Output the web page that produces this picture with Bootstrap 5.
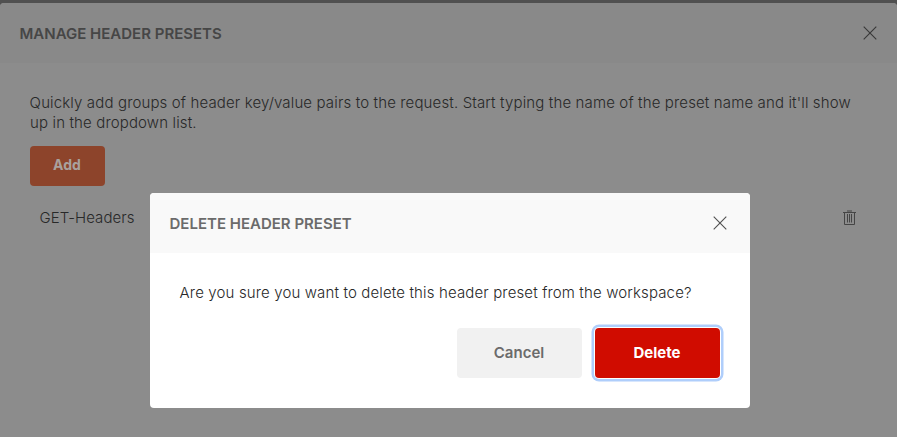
<!DOCTYPE html>
<html lang="en">
<head>
<meta charset="utf-8">
<title>Manage Header Presets</title>
<link href="https://cdn.jsdelivr.net/npm/bootstrap@5.3.0/dist/css/bootstrap.min.css" rel="stylesheet">
<style>
body{font-family:Inter,sans-serif;font-size:15px;line-height:20px;background:#505050;height:437px;overflow:hidden;color:#282828}
.page-panel{margin-top:3px;height:434px;background:#8c8c8c;border-radius:4px 4px 0 0;overflow:hidden}
.panel-head{height:60px;padding:0 20px 0 19.5px;background:#898989;color:#464646}
.panel-title{font-size:15px;font-weight:600;line-height:20px;padding-top:2px;letter-spacing:0}
.panel-main{padding:30px}
.panel-main p,.confirm-main p{font-weight:350;letter-spacing:.14px;text-indent:-.4px}
.btn-add{width:75px;height:40px;margin-top:13px;padding:0 1px 3px 0;background:#8d442b;color:#a9a19e;font-size:14px;font-weight:700;border:0;border-radius:4px}
.preset-row{padding:0 11px 0 9.500px;margin-top:22px;font-weight:350}
.preset-row span{letter-spacing:.06px}
.dialog-layer{top:193px;left:150px}
.confirm-box{width:600px;height:215px;background:#fff;border-radius:4px;overflow:hidden}
.confirm-box .panel-head{background:#f9f9f9;color:#6b6b6b;padding-right:23px}
.confirm-main{padding:30px}
.btn-wide{width:125px;height:50px;padding:0 1px 0 0;border:0;border-radius:4px;font-size:15px;font-weight:600}
.confirm-actions{gap:13px;margin-top:25px}
.btn-cancel{background:#f1f1f1;color:#6b6b6b}
.btn-delete{background:#d00c00;color:#fff;font-weight:700;box-shadow:0 0 0 1px #fff,0 0 0 3.500px #afcefb}
</style>
<script src="https://cdn.jsdelivr.net/npm/bootstrap@5.3.0/dist/js/bootstrap.bundle.min.js"></script>
</head>
<body>
<main class="page-panel">
  <header class="panel-head d-flex align-items-center justify-content-between">
    <h1 class="panel-title mb-0">MANAGE HEADER PRESETS</h1>
    <svg width="14" height="14" viewBox="0 0 14 14" fill="none" stroke="#383838" stroke-width="1.1"><path d="M.7.7l12.6 12.6M13.3.7L.7 13.3"/></svg>
  </header>
  <section class="panel-main">
    <p class="m-0">Quickly add groups of header key/value pairs to the request. Start typing the name of the preset name and it'll show up in the dropdown list.</p>
    <button class="btn btn-add d-block" type="button">Add</button>
    <div class="preset-row d-flex align-items-center justify-content-between">
      <span>GET-Headers</span>
      <svg width="13" height="16" viewBox="0 0 13 16" fill="none" stroke="#454545"><path d="M0 2.500h13M4 1h5M1.500 3v11.500h10V3"/><path d="M4.500 4v8.500M6.500 4v8.500M8.500 4v8.500"/></svg>
    </div>
  </section>
</main>
<div class="dialog-layer position-absolute">
  <section class="confirm-box" role="dialog">
    <header class="panel-head d-flex align-items-center justify-content-between">
      <h2 class="panel-title mb-0">DELETE HEADER PRESET</h2>
      <svg width="14" height="14" viewBox="0 0 14 14" fill="none" stroke="#505050" stroke-width="1.1"><path d="M.7.7l12.6 12.6M13.3.7L.7 13.3"/></svg>
    </header>
    <div class="confirm-main">
      <p class="m-0">Are you sure you want to delete this header preset from the workspace?</p>
      <div class="confirm-actions d-flex justify-content-end">
        <button class="btn btn-wide btn-cancel" type="button">Cancel</button>
        <button class="btn btn-wide btn-delete" type="button">Delete</button>
      </div>
    </div>
  </section>
</div>
</body>
</html>
